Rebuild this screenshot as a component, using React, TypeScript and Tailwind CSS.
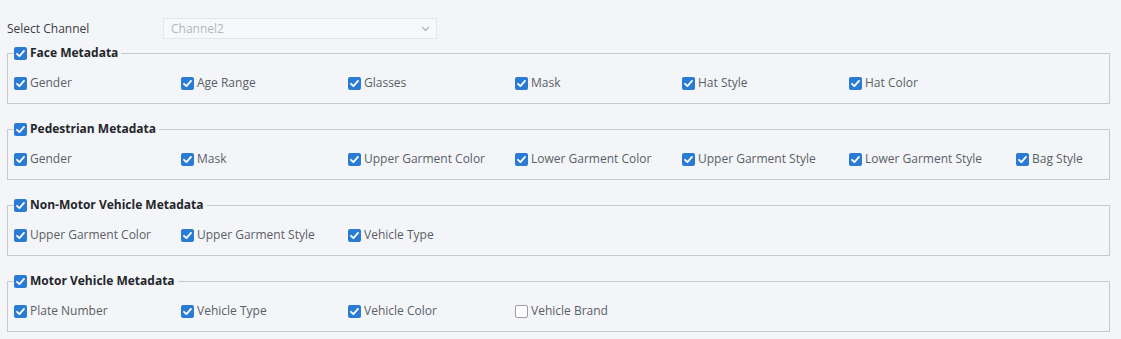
import React from "react";

type Item = { label: string; checked: boolean };
type Group = { title: string; items: Item[] };

const groups: Group[] = [
  {
    title: "Face Metadata",
    items: ["Gender", "Age Range", "Glasses", "Mask", "Hat Style", "Hat Color"].map((label) => ({ label, checked: true })),
  },
  {
    title: "Pedestrian Metadata",
    items: [
      "Gender",
      "Mask",
      "Upper Garment Color",
      "Lower Garment Color",
      "Upper Garment Style",
      "Lower Garment Style",
      "Bag Style",
    ].map((label) => ({ label, checked: true })),
  },
  {
    title: "Non-Motor Vehicle Metadata",
    items: ["Upper Garment Color", "Upper Garment Style", "Vehicle Type"].map((label) => ({ label, checked: true })),
  },
  {
    title: "Motor Vehicle Metadata",
    items: [
      { label: "Plate Number", checked: true },
      { label: "Vehicle Type", checked: true },
      { label: "Vehicle Color", checked: true },
      { label: "Vehicle Brand", checked: false },
    ],
  },
];

function Box({ checked }: { checked: boolean }) {
  if (!checked) {
    return (
      <svg width="13" height="13" viewBox="0 0 13 13" className="shrink-0">
        <rect x="0.5" y="0.5" width="12" height="12" rx="1.5" fill="#ffffff" stroke="#9a9ea4" />
      </svg>
    );
  }
  return (
    <svg width="13" height="13" viewBox="0 0 13 13" className="shrink-0">
      <rect x="0" y="0" width="13" height="13" rx="2" fill="#2a7bd4" />
      <path d="M3 6.8 L5.4 9.1 L10 3.9" fill="none" stroke="#ffffff" strokeWidth="1.8" strokeLinecap="round" strokeLinejoin="round" />
    </svg>
  );
}

export default function App() {
  return (
    <div
      className="h-[339px] w-full overflow-hidden bg-[#f3f5f8] pl-[7px] pr-[11px] pt-[18px] text-[12px] text-[#5a5f66]"
      style={{ fontFamily: '"Open Sans", "Noto Sans", Arial, sans-serif' }}
    >
      <div className="flex h-[21px] items-center">
        <span className="w-[156px] text-[#3c4046]">Select Channel</span>
        <div className="flex h-[21px] w-[274px] items-center justify-between border border-[#e3e6ea] bg-[#f7f8fa] pl-[7px] pr-[6px] text-[#b3b7bd]">
          <span>Channel2</span>
          <svg width="9" height="6" viewBox="0 0 9 6">
            <path d="M1 1 L4.5 4.5 L8 1" fill="none" stroke="#aeb2b8" strokeWidth="1.2" />
          </svg>
        </div>
      </div>

      <div className="mt-[6px] flex flex-col gap-[17px]">
        {groups.map((g) => (
          <fieldset key={g.title} className="min-w-0 border border-[#c6c9cd] px-[6px] pb-[12px]">
            <legend className="flex h-[16px] items-center gap-[3px] pr-[3px] font-bold text-[#23262a]">
              <Box checked />
              <span>{g.title}</span>
            </legend>
            <div className="flex overflow-hidden pt-[14px]">
              {g.items.map((it) => (
                <label key={it.label} className="flex h-[16px] w-[167px] shrink-0 items-center gap-[3px]">
                  <Box checked={it.checked} />
                  <span>{it.label}</span>
                </label>
              ))}
            </div>
          </fieldset>
        ))}
      </div>
    </div>
  );
}
